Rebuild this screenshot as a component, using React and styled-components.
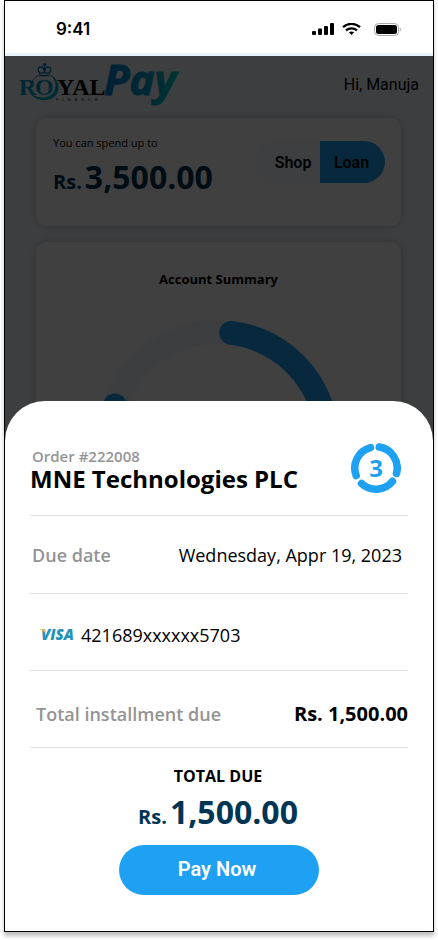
import React from "react";
import styled, { createGlobalStyle } from "styled-components";

const sans = '"Open Sans", "Noto Sans", sans-serif';
const roboto = 'Roboto, "Liberation Sans", sans-serif';
const blue = "#1ea1f3";
const navy = "#003554";

const GlobalStyle = createGlobalStyle`
  *, *::before, *::after { box-sizing: border-box; }
  body { margin: 0; background: #fff; color: #000; font-family: ${sans}; }
  p, h1, h2, dl, dt, dd { margin: 0; }
  button { border: 0; padding: 0; cursor: pointer; }
`;

const Phone = styled.main`
  display: flex;
  flex-direction: column;
  min-height: calc(100vh - 8px);
  margin: 0 4px 8px;
  border: 1px solid #000;
  background: #fff;
  box-shadow: 0 4px 4px rgba(0, 0, 0, 0.25);
`;

const StatusBar = styled.header`
  display: flex;
  align-items: center;
  justify-content: space-between;
  height: 55px;
  padding: 4px 32px 0 51px;
  border-bottom: 3px solid #e8f3fc;
  font: 600 17px/24px Inter, sans-serif;
`;

const StatusIcons = styled.div`
  display: flex;
  align-items: center;
  gap: 13px;
`;

const Reception = styled.div`
  display: flex;
  gap: 8px;
`;

const Stage = styled.div`
  display: grid;
  flex: 1;
  overflow: hidden;
`;

const Dashboard = styled.div`
  display: flex;
  flex-direction: column;
  grid-area: 1 / 1;
  gap: 16px;
  padding: 0 32px 0 31px;
  background: #f0f7fd;
`;

const TopBar = styled.div`
  display: flex;
  align-items: center;
  justify-content: space-between;
  height: 62px;
  margin: 0 -18px -16px -16px;
  padding-bottom: 4px;
  font: 400 16px/24px ${roboto};
`;

const Card = styled.section`
  border-radius: 10px;
  background: #fff;
  box-shadow: 0 0 10px rgba(0, 0, 0, 0.2);
`;

const SpendCard = styled(Card)`
  display: flex;
  justify-content: space-between;
  height: 108px;
  padding: 16px 16px 0 17px;
`;

const Caption = styled.p`
  padding-bottom: 1px;
  font-size: 11px;
  line-height: 18px;
`;

const Amount = styled.p`
  display: flex;
  align-items: baseline;
  justify-content: ${(p) => (p.$centered ? "center" : "flex-start")};
  gap: 3px;
  padding-right: ${(p) => (p.$centered ? 2 : 0)}px;
  color: ${navy};
  font-weight: 700;
  font-size: 32px;
  line-height: 48px;
`;

const Currency = styled.span`
  font-size: 20px;
`;

const Toggle = styled.div`
  display: flex;
  height: 42px;
  margin-top: 7px;
  border-radius: 21px;
  overflow: hidden;
`;

const ToggleButton = styled.button`
  width: 65px;
  padding: ${(p) => (p.$active ? "2px 2px 0 0" : "2px 0 0 11px")};
  background: ${(p) => (p.$active ? blue : "#f8f9ff")};
  color: #000;
  font: 600 16px/24px ${roboto};
`;

const SummaryCard = styled(Card)`
  display: flex;
  flex-direction: column;
  align-items: center;
  gap: 31px;
  padding: 28px 0 32px;
`;

const SummaryTitle = styled.h2`
  font-size: 13px;
  line-height: 19px;
`;

const Overlay = styled.div`
  display: flex;
  flex-direction: column;
  justify-content: flex-end;
  grid-area: 1 / 1;
  z-index: 1;
  background: rgba(0, 0, 0, 0.75);
`;

const Sheet = styled.section`
  display: flex;
  flex-direction: column;
  padding: 40px 25px 36px;
  border-radius: 40px 40px 0 0;
  background: #fff;
`;

const SheetHeader = styled.div`
  display: flex;
  justify-content: space-between;
  height: 74px;
  padding: 2px 7px 0 0;
`;

const OrderNumber = styled.p`
  padding: 3px 0 0 2px;
  color: #949494;
  font-weight: 600;
  font-size: 15px;
  line-height: 20px;
`;

const Merchant = styled.h1`
  font-size: 24px;
  line-height: 26px;
`;

const Details = styled.dl`
  display: flex;
  flex-direction: column;
  border-bottom: 1px solid #dfdfdf;
`;

const Row = styled.div`
  display: flex;
  align-items: center;
  justify-content: ${(p) => (p.$start ? "flex-start" : "space-between")};
  gap: 6px;
  height: 77px;
  padding: ${(p) => p.$top || 0}px ${(p) => p.$right || 0}px 0 ${(p) => p.$left}px;
  border-top: 1px solid #dfdfdf;
  font-size: 18px;
  line-height: 24px;

  &:first-child { height: 78px; }
`;

const Label = styled.dt`
  display: flex;
  color: #949494;
  font-weight: 600;
`;

const Value = styled.dd`
  font-size: ${(p) => (p.$strong ? 20 : 18)}px;
  font-weight: ${(p) => (p.$strong ? 700 : 400)};
`;

const TotalTitle = styled.h2`
  padding: 16px 2px 0 0;
  font-size: 16px;
  line-height: 24px;
  text-align: center;
`;

const PayButton = styled.button`
  align-self: center;
  width: 200px;
  height: 50px;
  margin-top: 4px;
  padding: 0 4px 2px 0;
  border-radius: 25px;
  background: ${blue};
  color: #fff;
  font: 600 20px/24px ${roboto};
`;

const point = (c, r, deg) => {
  const a = ((deg - 90) * Math.PI) / 180;
  return `${(c + r * Math.cos(a)).toFixed(2)} ${(c + r * Math.sin(a)).toFixed(2)}`;
};

const arc = (c, r, from, to) =>
  `M${point(c, r, from)} A${r} ${r} 0 ${to - from > 180 ? 1 : 0} 1 ${point(c, r, to)}`;

function Signal() {
  return (
    <svg width="22" height="12" viewBox="0 0 22 12" role="img" aria-label="Signal">
      <rect x="0" y="8" width="4" height="4" rx="1" />
      <rect x="6" y="5.5" width="4" height="6.5" rx="1" />
      <rect x="12" y="3" width="4" height="9" rx="1" />
      <rect x="18" y="0" width="4" height="12" rx="1" />
    </svg>
  );
}

function Wifi() {
  return (
    <svg width="19" height="12" viewBox="0 0 19 12" fill="none" stroke="#000" strokeWidth="2.3" role="img" aria-label="Wi-Fi">
      <path d="M1 4.2C5.8-.2 13.2-.2 18 4.2" />
      <path d="M4 7.4c3.2-2.8 7.8-2.8 11 0" />
      <path d="M6.9 9.3c1.5-1.2 3.7-1.2 5.2 0L9.5 12z" fill="#000" stroke="none" />
    </svg>
  );
}

function Battery() {
  return (
    <svg width="27" height="13" viewBox="0 0 27 13" role="img" aria-label="Battery">
      <rect x="0.5" y="0.5" width="24" height="12" rx="4" fill="none" stroke="#aaa" />
      <rect x="2" y="2" width="21" height="9" rx="2.5" />
      <path d="M25.7 4.5v4c1.5-.6 1.5-3.4 0-4z" fill="#aaa" />
    </svg>
  );
}

function Logo() {
  return (
    <svg width="172" height="52" viewBox="0 -2 172 52" role="img" aria-label="Royal Finance Pay">
      <defs>
        <linearGradient id="royal" x1="0" y1="0" x2="0.5" y2="1">
          <stop offset="0" stopColor="#0878b8" />
          <stop offset="1" stopColor="#00b4d4" />
        </linearGradient>
        <linearGradient id="pay" x1="0" y1="0" x2="1" y2="0">
          <stop offset="0" stopColor="#0082d4" />
          <stop offset="0.5" stopColor="#0096cc" />
          <stop offset="1" stopColor="#00d0c4" />
        </linearGradient>
      </defs>
      <g fontFamily="Liberation Serif, serif" fontWeight="700" fontSize="24">
        <text x="-1" y="34" fill="url(#royal)">R</text>
        <text x="15" y="34" fill="url(#royal)">O</text>
        <text x="37" y="34">YAL</text>
      </g>
      <path
        d="M28 13C41 17 42 33 31 38 23 41 13 38 9 31c5 5 13 7 20 4 9-4 9-17-1-22z"
        fill="url(#royal)"
      />
      <path d="M20 14c-4 1-7 4-8 7" fill="none" stroke="#0878b8" />
      <g fill="none" stroke="#0878b8" strokeWidth="1.3">
        <path d="M20 12c-3-3-2-6 1-6 2 0 3 2 3.500 5M29 12c3-3 2-6-1-6-2 0-3 2-3.500 5M24.500 6v5M19 12.500c3-1 8-1 11 0M19.500 14.500h10" />
        <path d="M24.500 2v4M22.500 3.500h4" />
      </g>
      <text x="36" y="40" fontFamily="Liberation Sans, sans-serif" fontSize="4" letterSpacing="4">FINANCE</text>
      <text x="84" y="34" fontFamily="Open Sans, sans-serif" fontWeight="700" fontStyle="italic" fontSize="42" fill="url(#pay)" stroke="url(#pay)">Pay</text>
    </svg>
  );
}

function SummaryChart() {
  return (
    <svg width="244" height="242" viewBox="0 0 244 242" fill="none" strokeWidth="24" strokeLinecap="round" role="img" aria-label="Account summary chart">
      <circle cx="121" cy="121" r="109" stroke="#f0f7ff" />
      <path d={arc(121, 109, 7, 110)} stroke={blue} />
      <path d={arc(121, 109, 190, 289)} stroke={blue} />
    </svg>
  );
}

function InstallmentRing() {
  return (
    <svg width="50" height="50" viewBox="0 0 50 50" fill="none" stroke={blue} strokeWidth="7.5" strokeLinecap="round" role="img" aria-label="3 installments">
      <path d={arc(25, 21.2, 9, 105)} />
      <path d={arc(25, 21.2, 129, 223)} />
      <path d={arc(25, 21.2, 249, 345)} />
      <text x="25" y="34" textAnchor="middle" fill={blue} stroke="none" fontFamily="Open Sans, sans-serif" fontWeight="700" fontSize="24">3</text>
    </svg>
  );
}

function VisaLogo() {
  return (
    <svg width="36" height="20" viewBox="0 0 36 20" role="img" aria-label="Visa">
      <text x="2" y="15" fill="#2493ba" fontFamily="Open Sans, sans-serif" fontStyle="italic" fontWeight="800" fontSize="15">VISA</text>
      <path d="M1 4h4.500l1.500 5.500C5.500 6.500 3.500 5 1 4.500z" fill="#efb54a" />
    </svg>
  );
}

export default function App() {
  return (
    <>
      <GlobalStyle />
      <Phone>
        <StatusBar>
          <span>9:41</span>
          <StatusIcons>
            <Reception>
              <Signal />
              <Wifi />
            </Reception>
            <Battery />
          </StatusIcons>
        </StatusBar>
        <Stage>
          <Dashboard>
            <TopBar>
              <Logo />
              <span>Hi, Manuja</span>
            </TopBar>
            <SpendCard>
              <div>
                <Caption>You can spend up to</Caption>
                <Amount><Currency>Rs.</Currency>3,500.00</Amount>
              </div>
              <Toggle>
                <ToggleButton type="button">Shop</ToggleButton>
                <ToggleButton type="button" $active>Loan</ToggleButton>
              </Toggle>
            </SpendCard>
            <SummaryCard>
              <SummaryTitle>Account Summary</SummaryTitle>
              <SummaryChart />
            </SummaryCard>
          </Dashboard>
          <Overlay>
            <Sheet role="dialog" aria-label="Installment payment">
              <SheetHeader>
                <div>
                  <OrderNumber>Order #222008</OrderNumber>
                  <Merchant>MNE Technologies PLC</Merchant>
                </div>
                <InstallmentRing />
              </SheetHeader>
              <Details>
                <Row $left={2} $right={6}>
                  <Label>Due date</Label>
                  <Value>Wednesday, Appr 19, 2023</Value>
                </Row>
                <Row $start $top={6} $left={9}>
                  <Label><VisaLogo /></Label>
                  <Value>421689xxxxxx5703</Value>
                </Row>
                <Row $top={10} $left={6}>
                  <Label>Total installment due</Label>
                  <Value $strong>Rs. 1,500.00</Value>
                </Row>
              </Details>
              <TotalTitle>TOTAL DUE</TotalTitle>
              <Amount $centered><Currency>Rs.</Currency>1,500.00</Amount>
              <PayButton type="button">Pay Now</PayButton>
            </Sheet>
          </Overlay>
        </Stage>
      </Phone>
    </>
  );
}
